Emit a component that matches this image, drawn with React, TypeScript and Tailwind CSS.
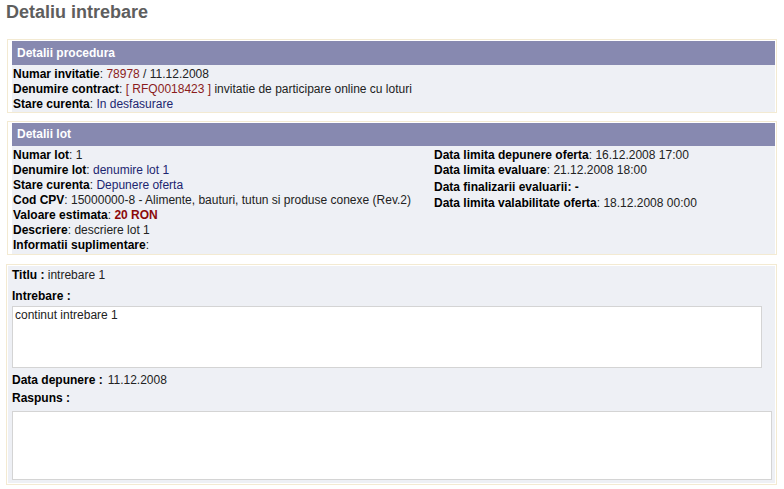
import React from "react";

const L = ({ children }: { children: React.ReactNode }) => (
  <span className="font-bold text-black">{children}</span>
);

export default function App() {
  return (
    <div className="w-[784px] h-[489px] bg-white overflow-hidden text-[12px] text-[#222] font-['Liberation_Sans',Arial,sans-serif]">
      <div className="h-[39px] pl-[6px] pt-[1px]">
        <h1 className="text-[18px] leading-[22px] font-bold text-[#5e5e5e]">Detaliu intrebare</h1>
      </div>

      {/* Panel 1 */}
      <div className="ml-[7px] w-[770px] border border-[#f3ead2] pl-[4px] pr-px pt-px pb-0">
        <div className="h-[24px] bg-[#8789b0] text-white font-bold leading-[24px] pl-[5px]">Detalii procedura</div>
        <div className="bg-[#eef0f5] leading-[15px] pt-[2px] pl-px">
          <div>
            <L>Numar invitatie</L>: <span className="text-[#8b1c1c]">78978</span> / 11.12.2008
          </div>
          <div>
            <L>Denumire contract</L>: <span className="text-[#8b1c1c]">[ RFQ0018423 ]</span> invitatie de participare online cu loturi
          </div>
          <div>
            <L>Stare curenta</L>: <span className="text-[#1c2670]">In desfasurare</span>
          </div>
        </div>
      </div>

      {/* Panel 2 */}
      <div className="mt-[8px] ml-[7px] w-[770px] border border-[#f3ead2] pl-[4px] pr-px pt-px pb-0">
        <div className="h-[23px] bg-[#8789b0] text-white font-bold leading-[23px] pl-[5px]">Detalii lot</div>
        <div className="bg-[#eef0f5] leading-[15px] pt-[2px] pb-[1px] pl-px flex">
          <div className="w-[421px]">
            <div><L>Numar lot</L>: 1</div>
            <div><L>Denumire lot</L>: <span className="text-[#1c2670]">denumire lot 1</span></div>
            <div><L>Stare curenta</L>: <span className="text-[#1c2670]">Depunere oferta</span></div>
            <div><L>Cod CPV</L>: 15000000-8 - Alimente, bauturi, tutun si produse conexe (Rev.2)</div>
            <div><L>Valoare estimata</L>: <span className="font-bold text-[#8b0a0a]">20 RON</span></div>
            <div><L>Descriere</L>: descriere lot 1</div>
            <div><L>Informatii suplimentare</L>:</div>
          </div>
          <div className="flex flex-col">
            <div className="h-[15px]"><L>Data limita depunere oferta</L>: 16.12.2008 17:00</div>
            <div className="h-[16px]"><L>Data limita evaluare</L>: 21.12.2008 18:00</div>
            <div className="h-[16px] leading-[17px]"><L>Data finalizarii evaluarii: -</L></div>
            <div className="h-[16px] leading-[17px]"><L>Data limita valabilitate oferta</L>: 18.12.2008 00:00</div>
          </div>
        </div>
      </div>

      {/* Panel 3 */}
      <div className="mt-[9px] ml-[6px] w-[771px] border border-[#f3ead2] p-px">
        <div className="bg-[#eef0f5] pl-[4px] pr-[4px] pt-[2px] pb-[3px]">
          <div className="leading-[15px] h-[20px]"><L>Titlu :</L> intrebare 1</div>
          <div className="leading-[15px] h-[18px] pt-[1px]"><L>Intrebare :</L></div>
          <div className="w-[750px] h-[62px] bg-white border border-[#d4d4d4] px-[2px] py-[1px] leading-[15px]">continut intrebare 1</div>
          <div className="leading-[15px] h-[18px] pt-[5px] box-content"><L>Data depunere :</L><span className="ml-[5px]">11.12.2008</span></div>
          <div className="leading-[15px] h-[19px]"><L>Raspuns :</L></div>
          <div className="mt-[1px] w-[760px] h-[69px] bg-white border border-[#d4d4d4]"></div>
        </div>
      </div>
    </div>
  );
}
